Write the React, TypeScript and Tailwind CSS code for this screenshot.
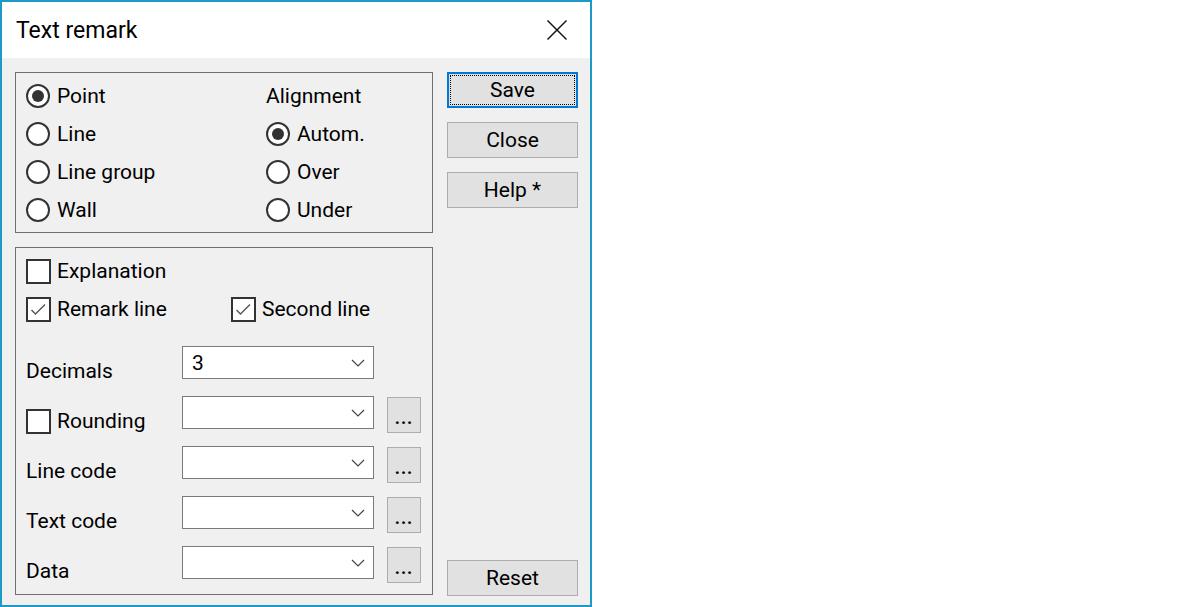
import React from "react";

const font = { fontFamily: "Roboto, 'Noto Sans', sans-serif" };

function Radio({ checked, label }: { checked?: boolean; label: string }) {
  return (
    <div className="flex items-center h-[24px]">
      <div className="w-[24px] h-[24px] rounded-full border-2 border-[#333333] bg-white flex items-center justify-center shrink-0">
        {checked && <div className="w-[12px] h-[12px] rounded-full bg-[#333333]" />}
      </div>
      <span className="ml-[7px] text-[21px] leading-[24px] text-black">{label}</span>
    </div>
  );
}

function Check({ checked, label }: { checked?: boolean; label: string }) {
  return (
    <div className="flex items-center h-[24px]">
      <div className="w-[25px] h-[25px] border-2 border-[#333333] bg-white flex items-center justify-center shrink-0">
        {checked && (
          <svg width="21" height="21" viewBox="0 0 21 21">
            <polyline points="3.5,11 7.5,15 17,5.5" fill="none" stroke="#555" strokeWidth="1.4" />
          </svg>
        )}
      </div>
      <span className="ml-[6px] text-[21px] leading-[24px] text-black">{label}</span>
    </div>
  );
}

function Combo({ value }: { value?: string }) {
  return (
    <div className="w-[192px] h-[33px] border border-[#7a7a7a] bg-white flex items-center justify-between pl-[9px] pr-[8px]">
      <span className="text-[21px] leading-[24px] text-black">{value ?? ""}</span>
      <svg width="14" height="8" viewBox="0 0 14 8">
        <polyline points="1,1 7,7 13,1" fill="none" stroke="#444" strokeWidth="1.2" />
      </svg>
    </div>
  );
}

function Dots() {
  return (
    <div className="w-[34px] h-[36px] mt-[1px] ml-[13px] bg-[#e1e1e1] border border-[#adadad] flex items-end justify-center pb-[5px]">
      <span className="text-[18px] leading-[18px] text-black font-bold tracking-[1px]">...</span>
    </div>
  );
}

function Btn({ label, focused }: { label: string; focused?: boolean }) {
  if (focused) {
    return (
      <div className="w-[131px] h-[36px] border-2 border-[#0078d7] bg-[#e1e1e1] p-[1px]">
        <div className="w-full h-full border border-dotted border-black flex items-center justify-center">
          <span className="text-[21px] leading-[24px] text-black -mt-[1px]">{label}</span>
        </div>
      </div>
    );
  }
  return (
    <div className="w-[131px] h-[36px] border border-[#adadad] bg-[#e1e1e1] flex items-center justify-center">
      <span className="text-[21px] leading-[24px] text-black -mt-[1px]">{label}</span>
    </div>
  );
}

function FieldRow({ label, check, children }: { label: string; check?: boolean; children: React.ReactNode }) {
  return (
    <div className="flex items-start h-[50px]">
      <div className="w-[156px] pt-[13px]">
        {check ? (
          <Check label={label} />
        ) : (
          <span className="text-[21px] leading-[24px] text-black block">{label}</span>
        )}
      </div>
      {children}
    </div>
  );
}

export default function App() {
  return (
    <div className="w-[1200px] h-[607px] bg-white" style={font}>
      <div className="w-[592px] h-[607px] border-2 border-[#1a9bc6] flex flex-col">
        <div className="h-[56px] bg-white flex items-center justify-between pl-[14px] pr-[22px] shrink-0">
          <span className="text-[23px] leading-[28px] text-black mt-[2px]">Text remark</span>
          <svg width="22" height="22" viewBox="0 0 22 22">
            <line x1="1.5" y1="1.5" x2="20.5" y2="20.5" stroke="#111" strokeWidth="1.5" />
            <line x1="20.5" y1="1.5" x2="1.5" y2="20.5" stroke="#111" strokeWidth="1.5" />
          </svg>
        </div>
        <div className="flex-1 bg-[#f0f0f0] flex pl-[13px] pt-[14px] pb-[9px]">
          <div className="w-[418px] flex flex-col">
            <div className="h-[161px] border border-[#707070] pl-[10px] pt-[4px]">
              <div className="grid grid-cols-[240px_1fr]">
                <div className="h-[38px] flex items-center"><Radio checked label="Point" /></div>
                <div className="h-[38px] flex items-center"><span className="text-[21px] leading-[24px] text-black">Alignment</span></div>
                <div className="h-[38px] flex items-center"><Radio label="Line" /></div>
                <div className="h-[38px] flex items-center"><Radio checked label="Autom." /></div>
                <div className="h-[38px] flex items-center"><Radio label="Line group" /></div>
                <div className="h-[38px] flex items-center"><Radio label="Over" /></div>
                <div className="h-[38px] flex items-center"><Radio label="Wall" /></div>
                <div className="h-[38px] flex items-center"><Radio label="Under" /></div>
              </div>
            </div>
            <div className="mt-[14px] h-[348px] border border-[#707070] pl-[10px] pt-[4px]">
              <div className="h-[38px] flex items-center"><Check label="Explanation" /></div>
              <div className="h-[38px] grid grid-cols-[205px_1fr] items-center">
                <Check checked label="Remark line" />
                <Check checked label="Second line" />
              </div>
              <div className="mt-[18px]">
                <FieldRow label="Decimals"><Combo value="3" /></FieldRow>
                <FieldRow label="Rounding" check><Combo /><Dots /></FieldRow>
                <FieldRow label="Line code"><Combo /><Dots /></FieldRow>
                <FieldRow label="Text code"><Combo /><Dots /></FieldRow>
                <FieldRow label="Data"><Combo /><Dots /></FieldRow>
              </div>
            </div>
          </div>
          <div className="ml-[14px] w-[131px] flex flex-col">
            <Btn label="Save" focused />
            <div className="mt-[14px]"><Btn label="Close" /></div>
            <div className="mt-[14px]"><Btn label="Help *" /></div>
            <div className="mt-auto"><Btn label="Reset" /></div>
          </div>
        </div>
      </div>
    </div>
  );
}
